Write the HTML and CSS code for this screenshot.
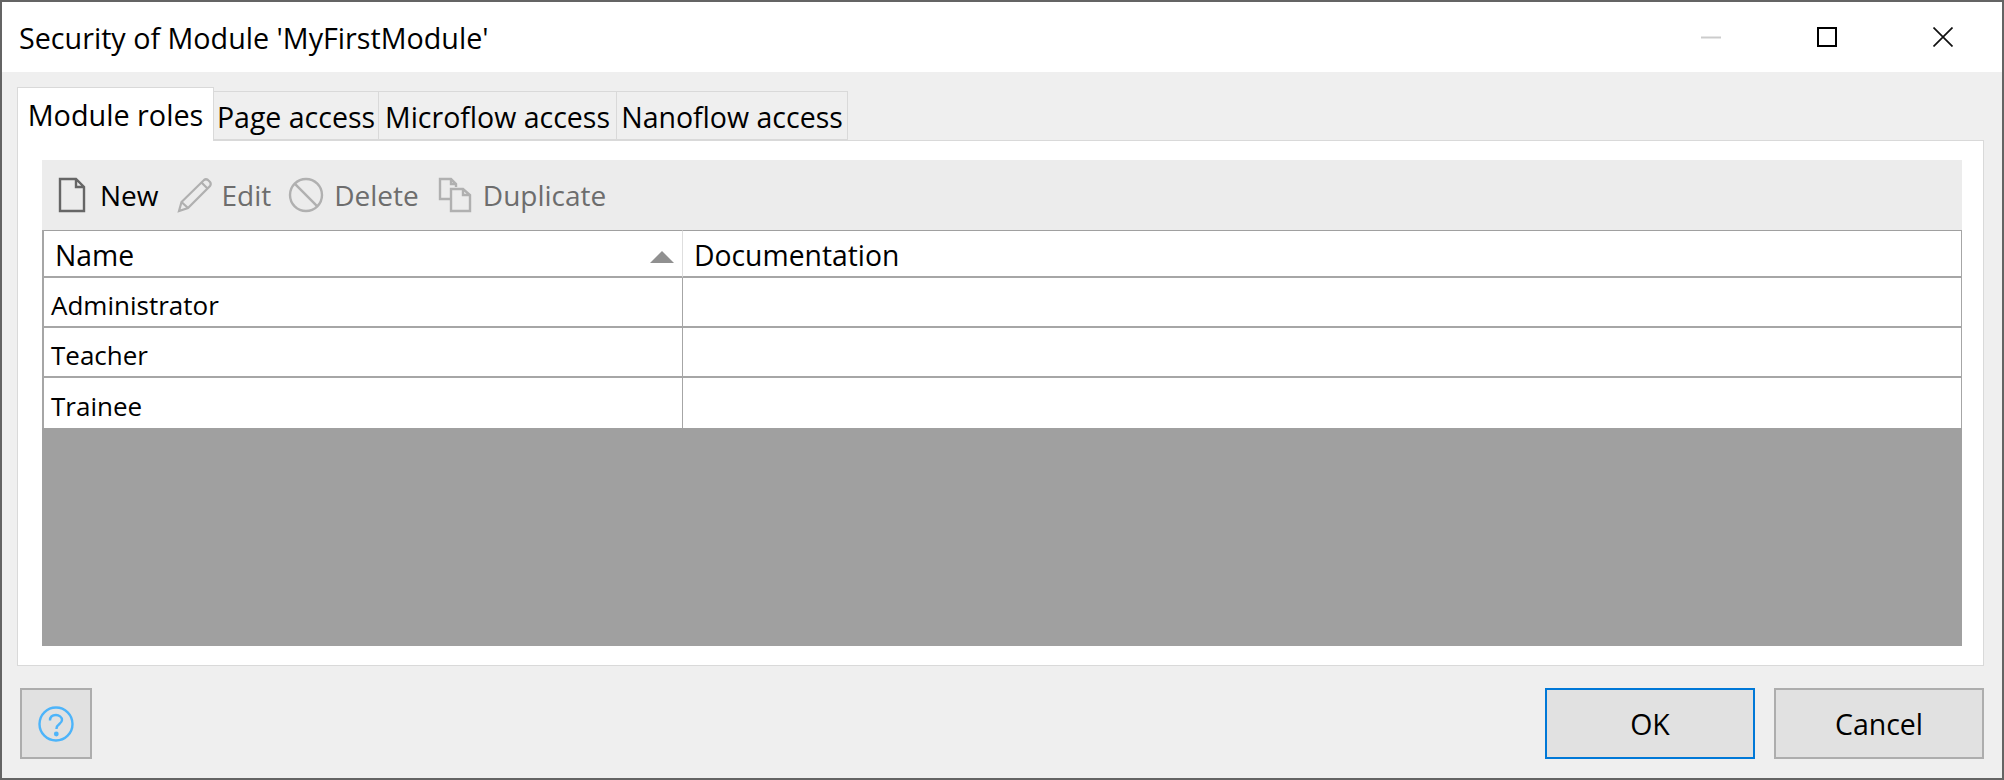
FILE: index.html
```html
<!DOCTYPE html>
<html lang="en">
<head>
    <meta charset="UTF-8">
    <title>Security of Module 'MyFirstModule'</title>
    <link rel="stylesheet" href="styles.css">
</head>
<body>
    <div class="window">
        <header class="titlebar">
            <h1 class="title">Security of Module 'MyFirstModule'</h1>
            <div class="controls">
                <div class="control"><svg width="20" height="20" viewBox="0 0 20 20"><path d="M0 10.5H20" stroke="#cccccc" stroke-width="2" fill="none"/></svg></div>
                <div class="control"><svg width="20" height="20" viewBox="0 0 20 20"><rect x="1" y="1" width="18" height="18" stroke="#000" stroke-width="2" fill="none"/></svg></div>
                <div class="control"><svg width="20" height="20" viewBox="0 0 20 20"><path d="M.5.5L19.5 19.5M19.5.5L.5 19.5" stroke="#111" stroke-width="1.7" fill="none"/></svg></div>
            </div>
        </header>
        <main class="content">
            <nav class="tabs">
                <div class="tab active">Module roles</div>
                <div class="tab tab-page">Page access</div>
                <div class="tab tab-micro">Microflow access</div>
                <div class="tab tab-nano">Nanoflow access</div>
            </nav>
            <section class="panel">
                <div class="toolbar">
                    <div class="tool tool-new">
                        <svg width="28" height="36" viewBox="0 0 28 36"><path d="M2 2H18L26 10V34H2ZM18 2V10H26" fill="none" stroke="#666" stroke-width="2.4"/></svg>
                        <span>New</span>
                    </div>
                    <div class="tool tool-edit disabled">
                        <svg width="36" height="36" viewBox="0 0 36 36"><path d="M2 34L4.500 25L27 3Q29 1.500 31 3L33 5Q34.500 7 33 9L11 31ZM4.500 25L11 31M24.500 5.500L30.500 11.500" fill="none" stroke="#b0b0b0" stroke-width="2.200"/></svg>
                        <span>Edit</span>
                    </div>
                    <div class="tool tool-delete disabled">
                        <svg width="36" height="36" viewBox="0 0 36 36"><circle cx="18" cy="18" r="16" fill="none" stroke="#b0b0b0" stroke-width="2.400"/><path d="M6.700 6.700L29.300 29.300" stroke="#b0b0b0" stroke-width="2.400"/></svg>
                        <span>Delete</span>
                    </div>
                    <div class="tool tool-duplicate disabled">
                        <svg width="34" height="36" viewBox="0 0 34 36"><path d="M12 22H2V2H13L18 7V10M13 2V7H18M13 12H25L32 18V34H13ZM25 12V18H32" fill="none" stroke="#b0b0b0" stroke-width="2.400"/></svg>
                        <span>Duplicate</span>
                    </div>
                </div>
                <div class="grid-area">
                    <table class="grid">
                        <thead>
                            <tr>
                                <th class="col-name">Name<span class="sort-arrow"></span></th>
                                <th>Documentation</th>
                            </tr>
                        </thead>
                        <tbody>
                            <tr><td>Administrator</td><td></td></tr>
                            <tr><td>Teacher</td><td></td></tr>
                            <tr><td>Trainee</td><td></td></tr>
                        </tbody>
                    </table>
                </div>
            </section>
            <footer class="footer">
                <button class="btn btn-help">
                    <svg width="36" height="36" viewBox="0 0 36 36"><circle cx="18" cy="18" r="16.500" fill="none" stroke="#4db4fa" stroke-width="2.400"/><path d="M12 14.500C12 10.500 15 9 18 9C21 9 24 11 24 14C24 18 18.500 18 18.500 22.500V23" fill="none" stroke="#4db4fa" stroke-width="2.400"/><circle cx="18.300" cy="28" r="2.400" fill="#4db4fa"/></svg>
                </button>
                <div class="footer-right">
                    <button class="btn btn-ok">OK</button>
                    <button class="btn">Cancel</button>
                </div>
            </footer>
        </main>
    </div>
</body>
</html>
```

FILE: styles.css
```css
* {
    box-sizing: border-box;
}
body {
    margin: 0;
    font-family: "Open Sans", sans-serif;
    font-size: 28px;
    color: #000;
    background-color: #646464;
}
.window {
    width: 2004px;
    height: 780px;
    border: 2px solid #646464;
    display: flex;
    flex-direction: column;
    background-color: #efefef;
}
.titlebar {
    height: 70px;
    flex: none;
    background-color: #fff;
    display: flex;
    align-items: center;
    justify-content: space-between;
    padding-left: 17px;
}
.title {
    margin: 0;
    font-size: 28.7px;
    font-weight: 400;
}
.controls {
    display: flex;
    height: 100%;
    padding-right: 1px;
}
.control {
    width: 116px;
    display: flex;
    align-items: center;
    justify-content: center;
}
.content {
    flex: 1;
    display: flex;
    flex-direction: column;
    padding: 15px 18px 19px 15px;
}
.tabs {
    display: flex;
    align-items: flex-end;
    height: 54px;
    margin-bottom: -1px;
    position: relative;
    z-index: 1;
}
.tab {
    height: 49px;
    margin-bottom: 1px;
    padding-top: 2px;
    border: 1px solid #d9d9d9;
    border-left: none;
    display: flex;
    align-items: center;
    justify-content: center;
    font-size: 28.5px;
    white-space: nowrap;
}
.tab.active {
    height: 54px;
    width: 197px;
    margin-bottom: 0;
    padding-top: 0;
    padding-bottom: 1px;
    background-color: #fff;
    border-left: 1px solid #d9d9d9;
    border-bottom: none;
    font-size: 28.8px;
}
.tab-page {
    width: 165px;
}
.tab-micro {
    width: 238px;
}
.tab-nano {
    width: 231px;
}
.panel {
    height: 526px;
    background-color: #fff;
    border: 1px solid #d9d9d9;
    padding: 19px 21px 19px 24px;
    display: flex;
    flex-direction: column;
}
.toolbar {
    height: 70px;
    flex: none;
    background-color: #ececec;
    display: flex;
    align-items: center;
    padding-left: 16px;
}
.tool {
    display: flex;
    align-items: center;
}
.tool.disabled {
    color: #6d6d6d;
}
.tool-new svg {
    margin-right: 14px;
}
.tool-edit {
    margin-left: 18px;
}
.tool-edit svg {
    margin-right: 9px;
}
.tool-delete {
    margin-left: 17px;
}
.tool-delete svg {
    margin-right: 10px;
}
.tool-duplicate {
    margin-left: 19px;
}
.tool-duplicate svg {
    margin-right: 11px;
}
.grid-area {
    flex: 1;
    background-color: #a0a0a0;
}
.grid {
    width: 100%;
    table-layout: fixed;
    border-collapse: separate;
    border-spacing: 0;
    background-color: #fff;
    border-left: 2px solid #a6a6a6;
    border-right: 1px solid #a6a6a6;
}
.grid th {
    height: 48px;
    padding: 3px 0 0 11px;
    font-size: 28.3px;
    font-weight: 400;
    text-align: left;
    border-top: 1px solid #a0a0a0;
    border-bottom: 2px solid #a6a6a6;
    position: relative;
}
.grid th.col-name {
    width: 639px;
    border-right: 1px solid #dedede;
}
.grid td {
    height: 50px;
    padding: 5px 0 0 7px;
    font-size: 26px;
    border-bottom: 2px solid #a6a6a6;
}
.grid td:first-child {
    border-right: 1px solid #a6a6a6;
}
.grid tr:last-child td {
    border-bottom: none;
}
.sort-arrow {
    position: absolute;
    right: 8px;
    top: 20px;
    border-left: 12px solid transparent;
    border-right: 12px solid transparent;
    border-bottom: 12px solid #909090;
}
.footer {
    flex: 1;
    display: flex;
    justify-content: space-between;
    align-items: flex-end;
    padding-left: 3px;
    font-size: 28.5px;
}
.footer-right {
    display: flex;
    gap: 19px;
}
.btn {
    height: 71px;
    width: 210px;
    background-color: #e1e1e1;
    border: 2px solid #adadad;
    font: inherit;
    color: #000;
    padding: 0;
    display: flex;
    align-items: center;
    justify-content: center;
}
.btn-help {
    width: 72px;
}
.btn-ok {
    border-color: #0078d7;
}
```
